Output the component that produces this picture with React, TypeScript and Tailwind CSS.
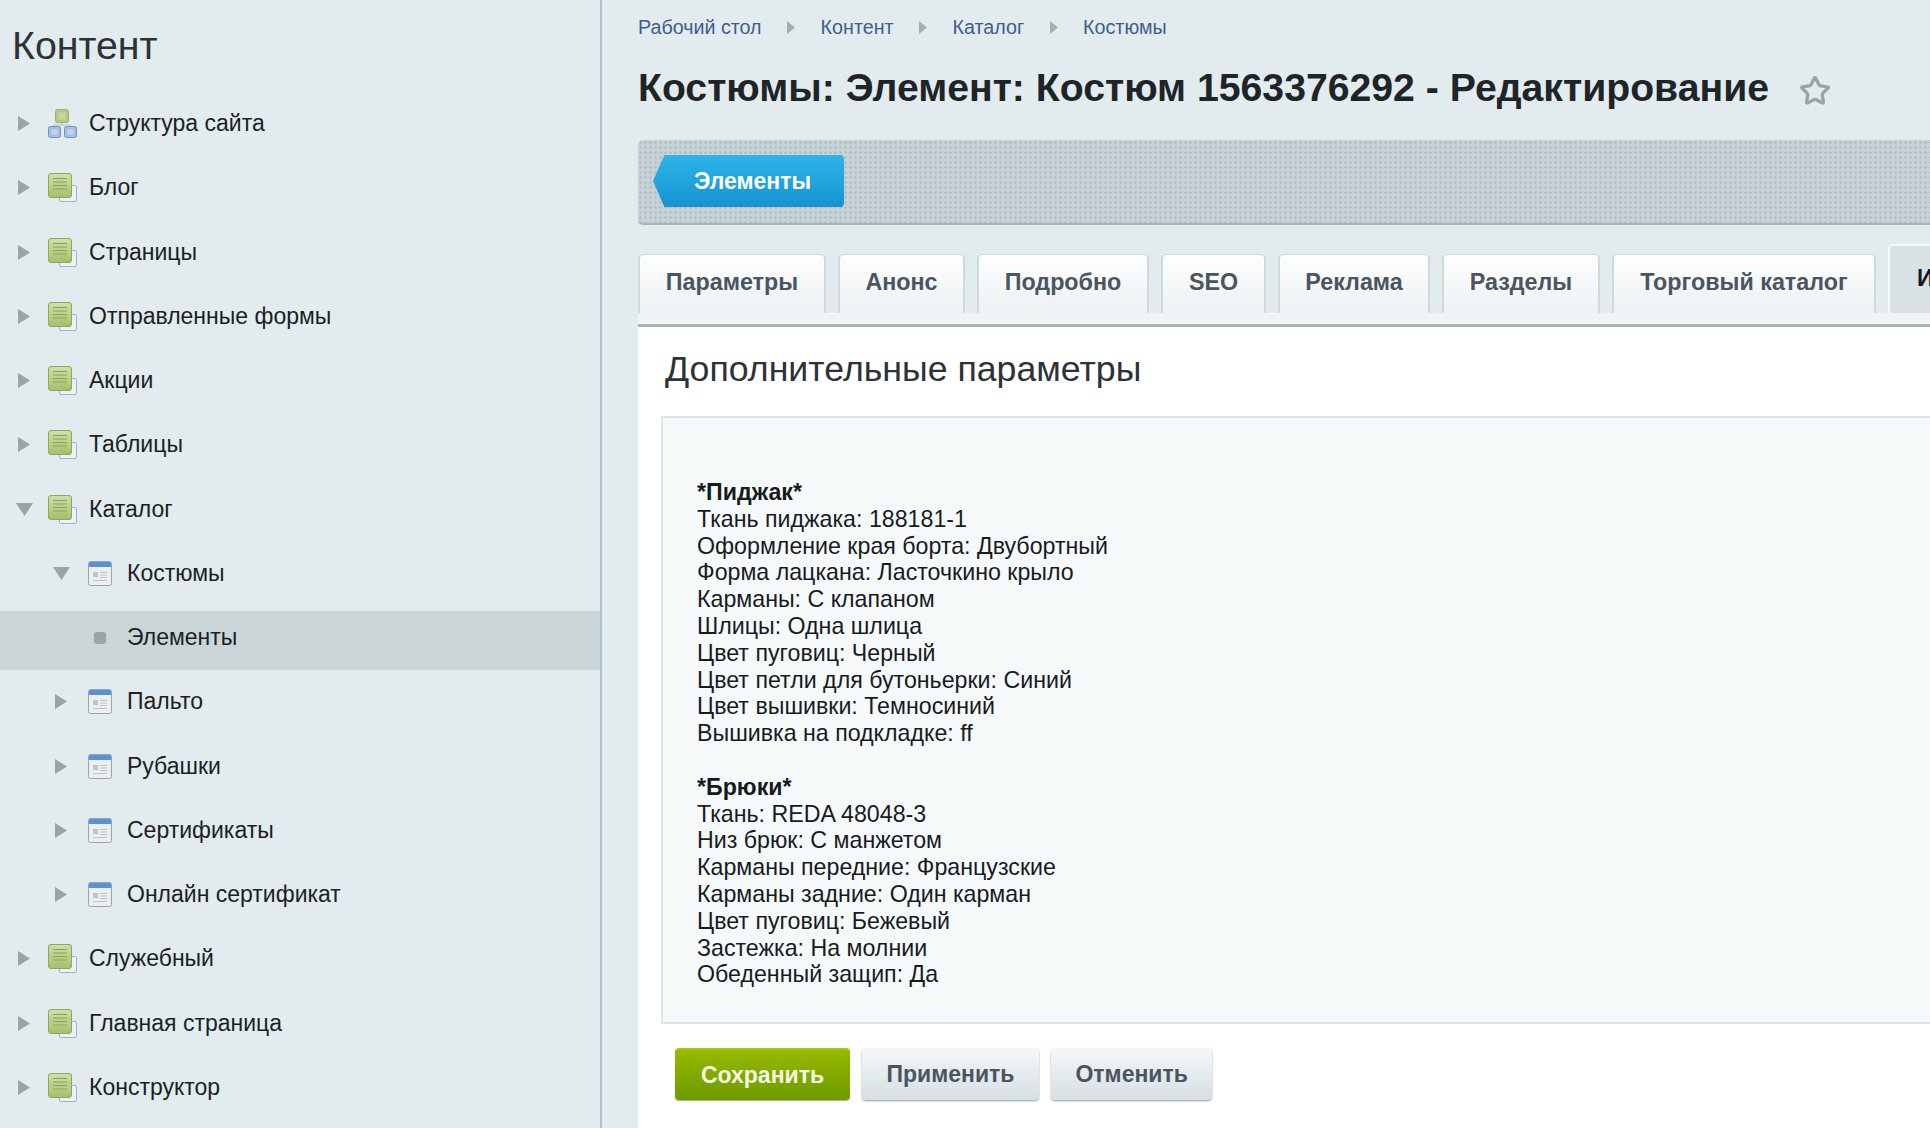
import { Star } from "lucide-react";

type Item = { label: string; icon: "site" | "doc" | "table" | "dot"; depth: 0 | 1; open?: boolean; active?: boolean };

const ITEMS: Item[] = [
  { label: "Структура сайта", icon: "site", depth: 0 },
  { label: "Блог", icon: "doc", depth: 0 },
  { label: "Страницы", icon: "doc", depth: 0 },
  { label: "Отправленные формы", icon: "doc", depth: 0 },
  { label: "Акции", icon: "doc", depth: 0 },
  { label: "Таблицы", icon: "doc", depth: 0 },
  { label: "Каталог", icon: "doc", depth: 0, open: true },
  { label: "Костюмы", icon: "table", depth: 1, open: true },
  { label: "Элементы", icon: "dot", depth: 1, active: true },
  { label: "Пальто", icon: "table", depth: 1 },
  { label: "Рубашки", icon: "table", depth: 1 },
  { label: "Сертификаты", icon: "table", depth: 1 },
  { label: "Онлайн сертификат", icon: "table", depth: 1 },
  { label: "Служебный", icon: "doc", depth: 0 },
  { label: "Главная страница", icon: "doc", depth: 0 },
  { label: "Конструктор", icon: "doc", depth: 0 },
];

const CRUMBS = ["Рабочий стол", "Контент", "Каталог", "Костюмы"];

const TABS = [
  { label: "Параметры", w: "w-[188px]" },
  { label: "Анонс", w: "w-[127px]" },
  { label: "Подробно", w: "w-[172px]" },
  { label: "SEO", w: "w-[105px]" },
  { label: "Реклама", w: "w-[152px]" },
  { label: "Разделы", w: "w-[158px]" },
  { label: "Торговый каталог", w: "w-[264px]" },
];

const JACKET = [
  "Ткань пиджака: 188181-1",
  "Оформление края борта: Двубортный",
  "Форма лацкана: Ласточкино крыло",
  "Карманы: С клапаном",
  "Шлицы: Одна шлица",
  "Цвет пуговиц: Черный",
  "Цвет петли для бутоньерки: Синий",
  "Цвет вышивки: Темносиний",
  "Вышивка на подкладке: ff",
];

const TROUSERS = [
  "Ткань: REDA 48048-3",
  "Низ брюк: С манжетом",
  "Карманы передние: Французские",
  "Карманы задние: Один карман",
  "Цвет пуговиц: Бежевый",
  "Застежка: На молнии",
  "Обеденный защип: Да",
];

function SiteIcon() {
  return (
    <svg width="29" height="29" viewBox="0 0 29 29" className="shrink-0">
      <path d="M14 14v2M6 17v-1h16v1" stroke="#b4c0c6" strokeWidth="1" fill="none" />
      <rect x="7.5" y="0.5" width="13" height="13" rx="2" fill="#b3c97f" stroke="#9bb068" />
      <rect x="10.5" y="3.5" width="7" height="7" fill="#c6d69c" />
      <rect x="0.5" y="17.5" width="12" height="11" rx="2" fill="#a4bfe4" stroke="#6f93c6" />
      <rect x="16.5" y="17.5" width="12" height="11" rx="2" fill="#a4bfe4" stroke="#6f93c6" />
      <rect x="3.5" y="20.5" width="6" height="5" fill="#c3d6ef" />
      <rect x="19.5" y="20.5" width="6" height="5" fill="#c3d6ef" />
    </svg>
  );
}

function DocIcon() {
  return (
    <svg width="29" height="29" viewBox="0 0 29 29" className="shrink-0">
      <defs>
        <linearGradient id="docfill" x1="0" y1="0" x2="0" y2="1">
          <stop offset="0" stopColor="#d2e0a8" />
          <stop offset="1" stopColor="#a5bf68" />
        </linearGradient>
      </defs>
      <rect x="11.5" y="12.5" width="17" height="16" rx="1.5" fill="#eef2f8" stroke="#9db0d4" />
      <rect x="0.5" y="0.5" width="23" height="24" rx="2.5" fill="url(#docfill)" stroke="#8fa65c" />
      <path d="M5 5.5h14M5 9h14M5 12.5h14M5 16h14" stroke="#8b9f5f" strokeWidth="1.2" />
    </svg>
  );
}

function TableIcon() {
  return (
    <svg width="24" height="25" viewBox="0 0 24 25" className="shrink-0">
      <rect x="0.5" y="0.5" width="23" height="24" rx="2" fill="#eceef0" stroke="#9aa4ac" />
      <path d="M1 2.5a1.5 1.5 0 0 1 1.5-1.5h19a1.5 1.5 0 0 1 1.5 1.5V6H1z" fill="#5b8fd6" />
      <rect x="5" y="11" width="5" height="5" fill="#bcc4ca" />
      <path d="M12 11.5h7M12 14h7M12 16.5h7M5 19.5h14" stroke="#bcc4ca" strokeWidth="1.2" />
    </svg>
  );
}

function Arrow({ open }: { open?: boolean }) {
  return open ? (
    <svg width="17" height="13" viewBox="0 0 17 13">
      <path d="M0 0h17L8.5 13z" fill="#9aa3a7" />
    </svg>
  ) : (
    <svg width="12" height="15" viewBox="0 0 12 15">
      <path d="M0 0l12 7.5L0 15z" fill="#9aa3a7" />
    </svg>
  );
}

function TreeRow({ item }: { item: Item }) {
  const pad = item.depth === 0 ? "pl-[12px]" : "pl-[49px]";
  const iconGap = item.depth === 0 ? "ml-[12px] mr-[12px]" : "ml-[15px] mr-[15px]";
  return (
    <div className="h-[64.25px]">
      <div className={`flex h-[59px] items-center pb-[6px] ${pad} ${item.active ? "bg-[#cad5d8]" : ""}`}>
        <span className="flex w-[24px] shrink-0 items-center justify-center">
          {item.icon !== "dot" && <Arrow open={item.open} />}
        </span>
        <span className={iconGap}>
          {item.icon === "site" && <SiteIcon />}
          {item.icon === "doc" && <DocIcon />}
          {item.icon === "table" && <TableIcon />}
          {item.icon === "dot" && (
            <span className="flex w-[24px] justify-center">
              <span className="h-[12px] w-[12px] rounded-[3px] bg-[#9aa5aa]" />
            </span>
          )}
        </span>
        <span className="text-[23px] leading-none text-[#1b1f24]">{item.label}</span>
      </div>
    </div>
  );
}

function Sidebar() {
  return (
    <aside className="h-full w-[602px] shrink-0 overflow-hidden border-r-2 border-[#aec1d8] bg-[#e2ebed]">
      <div className="h-[97px] pl-[12px] pt-[25px] text-[39.3px] leading-[41px] text-[#2c3236]">Контент</div>
      {ITEMS.map((item) => (
        <TreeRow key={item.label} item={item} />
      ))}
    </aside>
  );
}

function ActionBtn({ label, primary }: { label: string; primary?: boolean }) {
  return primary ? (
    <button className="h-[52px] w-[175px] rounded-[4px] border-t-2 border-[#a5c900] bg-gradient-to-b from-[#97b900] to-[#6f9a00] text-[23px] font-bold text-[#f4f8e4] shadow-[0_1px_1px_rgba(70,90,0,0.5)]">
      {label}
    </button>
  ) : (
    <button className="h-[52px] rounded-[4px] bg-gradient-to-b from-[#f5f8f9] to-[#d5dfe3] px-[24.5px] text-[23px] font-bold text-[#4a5560] shadow-[0_1px_2px_rgba(60,70,75,0.55)]">
      {label}
    </button>
  );
}

export default function App() {
  return (
    <div className="flex h-[1128px] w-[1930px] overflow-hidden bg-[#e2ebed] font-['Liberation_Sans',Arial,sans-serif]">
      <Sidebar />
      <main className="min-w-0 flex-1 pl-[36px]">
        <nav className="flex h-[54px] items-center pt-[2px] text-[19.7px] text-[#3f5d8c]">
          {CRUMBS.map((c, i) => (
            <span key={c} className="flex items-center">
              {i > 0 && (
                <svg width="8" height="13" viewBox="0 0 8 13" className="mx-[25.5px]">
                  <path d="M0 0l8 6.5L0 13z" fill="#a3adb2" />
                </svg>
              )}
              {c}
            </span>
          ))}
        </nav>
        <div className="flex h-[68px] items-center">
          <h1 className="text-[39.2px] font-bold leading-none text-[#1f2429]">
            Костюмы: Элемент: Костюм 1563376292 - Редактирование
          </h1>
          <Star className="ml-[30px] mt-[6px] h-[32px] w-[32px] text-[#9aa5aa]" strokeWidth={2.5} />
        </div>
        <div className="mt-[18px] flex h-[85px] items-start rounded-l-[5px] border-b-2 border-[#a9b5b9] bg-[#c6d2d6] bg-[radial-gradient(#b0bdc2_1px,transparent_1.2px)] bg-[length:5px_5px] pl-[15px] pt-[15px]">
          <div className="flex h-[52px] w-[191px] items-center justify-center pl-[8px] text-[23px] font-bold text-white [clip-path:polygon(6%_0,99%_0,100%_6%,100%_94%,99%_100%,6%_100%,0_50%)] bg-gradient-to-b from-[#2db5e6] to-[#1693d2]">
            Элементы
          </div>
        </div>
        <div className="mt-[19px] flex h-[69px] items-end gap-[12px] whitespace-nowrap">
          {TABS.map((t) => (
            <div
              key={t.label}
              className={`flex h-[59px] shrink-0 items-center justify-center rounded-t-[5px] border-x-2 border-t border-[#d0d9dc] bg-gradient-to-b from-[#fdfefe] to-[#edf1f3] pb-[4px] text-[23.3px] font-bold text-[#4a5560] ${t.w}`}
            >
              {t.label}
            </div>
          ))}
          <div className="h-[69px] w-[100px] shrink-0 rounded-t-[5px] border-t-2 border-l-2 border-[#f5f8f9] bg-[#d8e1e4] pl-[27px] pt-[15px] text-[23.3px] font-bold text-[#15181b]">
            Индивидуальные
          </div>
        </div>
        <div className="h-[14px] border-b-[3px] border-[#a9b4b8] bg-[#f0f4f5]" />
        <section className="h-[802px] bg-white pl-[23px]">
          <h2 className="flex h-[89px] items-center pb-[4px] pl-[4px] text-[35.7px] leading-none text-[#2c3236]">Дополнительные параметры</h2>
          <div className="border-y-2 border-l-2 border-[#dde5e8] bg-[#f5f9fa] pb-[34px] pl-[34px] pt-[61px] text-[23.2px] leading-[26.8px] text-[#181b1e]">
            <div className="font-bold">*Пиджак*</div>
            {JACKET.map((l) => (
              <div key={l}>{l}</div>
            ))}
            <div className="mt-[26.8px] font-bold">*Брюки*</div>
            {TROUSERS.map((l) => (
              <div key={l}>{l}</div>
            ))}
          </div>
          <div className="ml-[14px] mt-[24px] flex items-start gap-[12px]">
            <ActionBtn label="Сохранить" primary />
            <ActionBtn label="Применить" />
            <ActionBtn label="Отменить" />
          </div>
        </section>
      </main>
    </div>
  );
}
